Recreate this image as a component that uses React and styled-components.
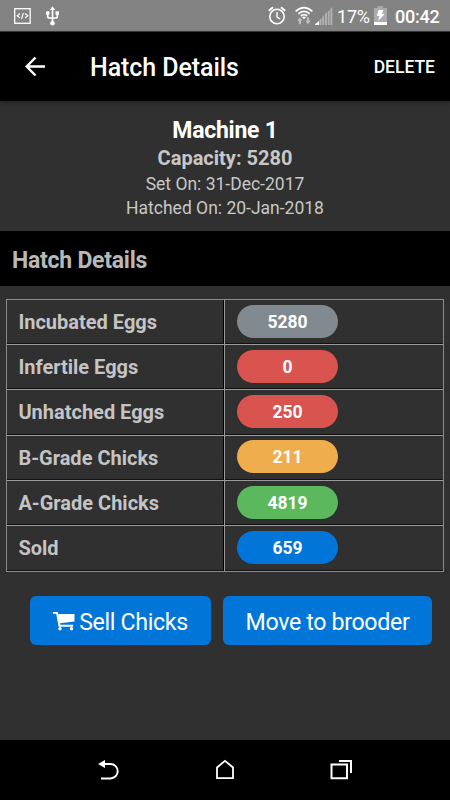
import React from "react";
import styled, { createGlobalStyle } from "styled-components";

const GlobalStyle = createGlobalStyle`
  * { box-sizing: border-box; }
  body { margin: 0; background: #303030; font-family: Roboto, "Liberation Sans", sans-serif; }
`;

const Screen = styled.div`
  width: 450px;
  height: 800px;
  display: flex;
  flex-direction: column;
  background: #303030;
  overflow: hidden;
`;

const StatusBar = styled.header`
  height: 32px;
  flex: none;
  display: flex;
  align-items: center;
  padding: 0 11px 0 14px;
  background: #838383;
  border-bottom: 1px solid #3c3c3c;
  color: #fff;
`;

const StatusIcon = styled.svg`
  display: block;
  flex: none;
  margin-left: ${(p) => p.$gap || 0}px;
`;

const Spacer = styled.div`
  flex: 1;
`;

const StatusText = styled.span`
  width: ${(p) => p.$width}px;
  flex: none;
  white-space: nowrap;
  font-size: ${(p) => p.$size}px;
  line-height: 31px;
  padding-top: 2px;
  font-weight: ${(p) => p.$weight || 400};
  margin-left: ${(p) => p.$gap || 0}px;
  letter-spacing: ${(p) => p.$spacing || 0}px;
`;

const AppBar = styled.div`
  height: 69px;
  flex: none;
  display: flex;
  align-items: center;
  padding: 1px 15px 0 25px;
  background: #000;
  box-shadow: 0 1px 3px rgba(0, 0, 0, 0.5);
  color: #fff;
`;

const Title = styled.h1`
  margin: 0 auto 0 45px;
  font-size: 25px;
  line-height: 30px;
  padding-top: 1px;
  font-weight: 500;
  letter-spacing: -0.08px;
`;

const TextButton = styled.button`
  border: 0;
  padding: 0;
  background: none;
  color: #fff;
  font: 500 17.5px/24px Roboto, sans-serif;
`;

const Summary = styled.section`
  height: 130px;
  flex: none;
  display: flex;
  flex-direction: column;
  align-items: center;
  padding-top: 15px;
`;

const SummaryLine = styled.div`
  font-size: ${(p) => p.$size}px;
  line-height: ${(p) => p.$line}px;
  font-weight: ${(p) => p.$weight || 400};
  color: ${(p) => p.$color || "#c8c8c8"};
  letter-spacing: ${(p) => p.$spacing || 0}px;
  white-space: nowrap;
`;

const SectionTitle = styled.h2`
  height: 55px;
  flex: none;
  margin: 0;
  padding: 3px 12px 0;
  background: #000;
  color: #b8b8b8;
  font-size: 23px;
  letter-spacing: -0.25px;
  line-height: 53px;
  font-weight: 700;
`;

const Table = styled.div`
  flex: none;
  margin: 13px 6px 0;
  border: 1px solid #8b8b8b;
  height: 273px;
  display: grid;
  grid-template-rows: repeat(6, 1fr);
`;

const Row = styled.div`
  display: grid;
  grid-template-columns: 218px 1fr;
  border-bottom: 1px solid #9a9a9a;
  box-shadow: inset 0 -1px 0 #111;
  &:last-child { border-bottom: 0; }
`;

const Label = styled.div`
  display: flex;
  align-items: center;
  padding-left: 11.4px;
  color: #c4c4c4;
  font-size: 20px;
  font-weight: 700;
  border-right: 1px solid #9c9c9c;
  box-shadow: inset -1px 0 0 #000;
`;

const Value = styled.div`
  display: flex;
  align-items: center;
  padding: 0 0 1.2px 12px;
`;

const Badge = styled.span`
  width: 101px;
  height: 33px;
  border-radius: 17px;
  background: ${(p) => p.$color};
  color: #fff;
  font-size: 17.5px;
  line-height: 34px;
  font-weight: 700;
  text-align: center;
`;

const Actions = styled.div`
  display: flex;
  gap: 12px;
  padding: 24px 18px 0 30px;
`;

const ActionButton = styled.button`
  width: ${(p) => p.$width}px;
  height: 49px;
  flex: none;
  display: flex;
  align-items: center;
  justify-content: center;
  gap: 4px;
  padding: 2px 0 0;
  border: 0;
  border-radius: 6px;
  background: #0275d8;
  color: #fff;
  font: 400 23.2px/30px Roboto, sans-serif;
  letter-spacing: -0.35px;
  white-space: nowrap;
`;

const NavBar = styled.nav`
  height: 60px;
  flex: none;
  margin-top: auto;
  display: flex;
  align-items: center;
  justify-content: space-between;
  padding: 0 98px 1px 96px;
  background: #000;
`;

const rows = [
  ["Incubated Eggs", 5280, "#818a91"],
  ["Infertile Eggs", 0, "#d9534f"],
  ["Unhatched Eggs", 250, "#d9534f"],
  ["B-Grade Chicks", 211, "#f0ad4e"],
  ["A-Grade Chicks", 4819, "#5cb85c"],
  ["Sold", 659, "#0275d8"],
];

const DebugIcon = () => (
  <StatusIcon width="17" height="16" viewBox="0 0 17 16" fill="none" stroke="#fff">
    <rect x="0.7" y="0.7" width="15.5" height="14.6" strokeWidth="1.3" />
    <path d="M6 5.5 3.2 7.8 6 10M11 5.5l2.8 2.3L11 10M9.4 5 7.6 10.8" strokeWidth="1.1" />
  </StatusIcon>
);

const UsbIcon = () => (
  <StatusIcon $gap={14} width="15" height="20" viewBox="0 0 15 20" fill="none" stroke="#fff">
    <path d="M7.5 3v14M2.7 7v3.5q0 1.5 1.8 1.5h6q1.8 0 1.8-1.5V7" strokeWidth="1.7" />
    <path d="M4.8 4 7.5.2 10.2 4z" fill="#fff" stroke="none" />
    <circle cx="7.5" cy="17.2" r="2.3" fill="#fff" stroke="none" />
    <circle cx="2.7" cy="7" r="2" fill="#fff" stroke="none" />
    <path d="M10.5 5.3H14v3.4h-3.5z" fill="#fff" stroke="none" />
  </StatusIcon>
);

const AlarmIcon = () => (
  <StatusIcon width="18" height="19" viewBox="0 0 18 19" fill="none" stroke="#fff">
    <circle cx="9" cy="10.5" r="7.2" strokeWidth="1.6" />
    <path d="M9 6v5l3.2 2" strokeWidth="1.4" />
    <path d="M.8 4.7 5 1.2M17.2 4.7 13 1.2" strokeWidth="1.8" />
  </StatusIcon>
);

const WifiIcon = () => (
  <StatusIcon $gap={9} width="18" height="19" viewBox="0 0 18 19" fill="none" stroke="#fff">
    <path d="M.6 5.3Q9-2.2 17.4 5.3M3.3 7.8Q9 2.8 14.7 7.8M5.8 10Q9 7.5 12.2 10" strokeWidth="1.6" />
    <path d="M7 11.2q2-1.5 4 0L9 13.2z" fill="#fff" stroke="none" />
    <path d="m2.2 14.7 2.7-3.4 2.7 3.4H6v3.5H3.8v-3.5zM10.2 14.8h1.7v-3.5h2.2v3.5h1.7L13 18.2z" fill="#bdbdbd" stroke="none" />
  </StatusIcon>
);

const SignalIcon = () => (
  <StatusIcon $gap={2} width="18" height="18" viewBox="0 0 18 18">
    <path d="M0 18v-.8L4 14v4z" fill="#fff" />
    <path d="M4.500 18v-5l2-2v7zM7.200 18v-8l2-2v10zM10 18V7l2-2v13zM12.800 18V4.500l1.800-1.500v15zM15.300 18V2L17.300 0v18z" fill="#b0b0b0" />
  </StatusIcon>
);

const BatteryIcon = () => (
  <StatusIcon $gap={4} width="13" height="19" viewBox="0 0 13 19">
    <path d="M0 2h3.500V0h5.500v2H13v17H0z" fill="#ababab" />
    <path d="M0 16h13v3H0z" fill="#fff" />
    <path d="M4.500 4h5L8 8h2.800L4 15l1.500-5H2.800z" fill="#fff" />
  </StatusIcon>
);

const BackArrow = () => (
  <svg width="20" height="22" viewBox="0 0 20 22" fill="none" stroke="#fff" strokeWidth="2.500">
    <path d="M20 10.500H2M10.500 1.500 1.700 10.500l8.800 9" />
  </svg>
);

const CartIcon = () => (
  <svg width="22" height="19" viewBox="0 0 22 19" fill="#fff">
    <path d="M0 0h4.600l.6 2H21.500v7.500L7 11.300l.3 1.500h12.900v1.900H5.600L3.200 1.700H0z" />
    <circle cx="7" cy="16.800" r="1.700" />
    <circle cx="18.500" cy="16.800" r="1.700" />
  </svg>
);

export default function App() {
  return (
    <Screen>
      <GlobalStyle />
      <StatusBar>
        <DebugIcon />
        <UsbIcon />
        <Spacer />
        <AlarmIcon />
        <WifiIcon />
        <SignalIcon />
        <StatusText $gap={4} $size={18} $width={33} $spacing={-0.2}>17%</StatusText>
        <BatteryIcon />
        <StatusText $gap={8} $size={18} $width={44} $weight={500} $spacing={-0.25}>00:42</StatusText>
      </StatusBar>
      <AppBar>
        <BackArrow />
        <Title>Hatch Details</Title>
        <TextButton>DELETE</TextButton>
      </AppBar>
      <Summary>
        <SummaryLine $size={23} $line={29} $weight={700} $color="#fff" $spacing={-0.25}>Machine 1</SummaryLine>
        <SummaryLine $size={20} $line={27} $weight={700}>Capacity: 5280</SummaryLine>
        <SummaryLine $size={17.5} $line={24}>Set On: 31-Dec-2017</SummaryLine>
        <SummaryLine $size={17.5} $line={24}>Hatched On: 20-Jan-2018</SummaryLine>
      </Summary>
      <SectionTitle>Hatch Details</SectionTitle>
      <Table>
        {rows.map(([label, value, color]) => (
          <Row key={label}>
            <Label>{label}</Label>
            <Value>
              <Badge $color={color}>{value}</Badge>
            </Value>
          </Row>
        ))}
      </Table>
      <Actions>
        <ActionButton $width={181}>
          <CartIcon />
          Sell Chicks
        </ActionButton>
        <ActionButton $width={209}>Move to brooder</ActionButton>
      </Actions>
      <NavBar>
        <svg width="24" height="22" viewBox="0 0 24 22" fill="none" stroke="#fff" strokeWidth="2">
          <path d="M5 5h9.500a7.200 7.200 0 0 1 0 14.400H5" />
          <path d="M2 5 9 1v8z" fill="#fff" stroke="none" />
        </svg>
        <svg width="20" height="21" viewBox="0 0 20 21" fill="none" stroke="#fff" strokeWidth="1.800">
          <path d="M2 19.200V8.500L10 1.800l8 6.700v10.700z" />
        </svg>
        <svg width="22" height="21" viewBox="0 0 22 21" fill="none" stroke="#fff" strokeWidth="2">
          <path d="M1.500 5.500h15.500v13.700H1.500zM9 2h12v12" />
        </svg>
      </NavBar>
    </Screen>
  );
}
